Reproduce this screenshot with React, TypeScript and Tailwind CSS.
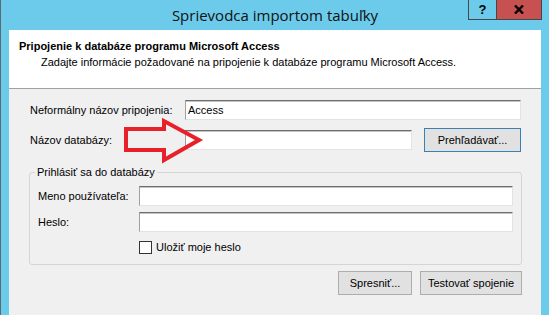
const font = { fontFamily: '"Liberation Sans", Arial, sans-serif' };

const TextBox = ({ value = '', width }: { value?: string; width: string }) => (
  <div
    className={`${width} h-[20px] bg-white border border-t-[#6e6e6e] border-l-[#a0a0a0] border-r-[#e3e3e3] border-b-[#e3e3e3] shadow-[inset_0_1px_0_#c4c4c4] flex items-center pl-[2px] text-[11px] text-black`}
  >
    {value}
  </div>
);

const WinButton = ({ label, width, primary = false }: { label: string; width: string; primary?: boolean }) => (
  <button
    className={`${width} h-[24px] bg-[#e1e1e1] border ${primary ? 'border-[#3c7fb1]' : 'border-[#adadad]'} text-[11px] text-black flex items-center justify-center`}
  >
    {label}
  </button>
);

const App = () => {
  return (
    <div className="w-[549px] h-[315px] bg-[#6ccbea] flex flex-col overflow-hidden border-l border-[#5a6a72]" style={font}>
      {/* Title bar */}
      <div className="h-[30px] grid grid-cols-[1fr_auto_1fr] items-start shrink-0">
        <div />
        <div className="pt-[5px] text-[15px] leading-[20px] text-[#111]" style={{ fontFamily: '"Open Sans", "Noto Sans", sans-serif' }}>
          Sprievodca importom tabuľky
        </div>
        <div className="flex justify-end pr-[7px]">
          <div className="flex h-[20px] border border-t-0 border-[#474747]">
            <div className="w-[28px] flex items-center justify-center text-[13px] font-bold text-black border-r border-[#474747]">
              ?
            </div>
            <div className="w-[44px] bg-[#c75050] flex items-center justify-center">
              <svg width="10" height="9" viewBox="0 0 10 9">
                <path d="M1 0.5 L9 8.5 M9 0.5 L1 8.5" stroke="#000" strokeWidth="2.4" />
              </svg>
            </div>
          </div>
        </div>
      </div>

      {/* Client area */}
      <div className="flex-1 ml-[8px] mr-[8px] flex flex-col">
        <div className="h-[59px] bg-white border-b border-[#a0a0a0] pl-[10px] pt-[10px] shrink-0">
          <div className="text-[11px] font-bold leading-[13px] text-black">
            Pripojenie k databáze programu Microsoft Access
          </div>
          <div className="text-[11px] leading-[13px] text-black pl-[22px] mt-[3px]">
            Zadajte informácie požadované na pripojenie k databáze programu Microsoft Access.
          </div>
        </div>

        <div className="flex-1 bg-[#f0f0f0] pl-[21px] pr-[19px] pt-[11px] text-[11px] text-black relative">
          <div className="flex items-center h-[20px]">
            <div className="w-[155px]">Neformálny názov pripojenia:</div>
            <TextBox value="Access" width="w-[336px]" />
          </div>

          <div className="flex items-center h-[24px] mt-[8px]">
            <div className="w-[155px]">Názov databázy:</div>
            <TextBox width="w-[227px]" />
            <div className="ml-[12px]">
              <WinButton label="Prehľadávať..." width="w-[97px]" primary />
            </div>
          </div>

          <fieldset className="-ml-[1px] mt-[14px] w-[493px] border border-[#d5d5d5] rounded-[3px] pl-[5px] pb-[10px]">
            <legend className="px-[2px] leading-[13px]">Prihlásiť sa do databázy</legend>
            <div className="flex items-center h-[20px] mt-[7px] pl-[3px]">
              <div className="w-[101px]">Meno používateľa:</div>
              <TextBox width="w-[374px]" />
            </div>
            <div className="flex items-center h-[20px] mt-[6px] pl-[3px]">
              <div className="w-[101px]">Heslo:</div>
              <TextBox width="w-[374px]" />
            </div>
            <div className="flex items-center h-[13px] mt-[9px] pl-[104px] gap-[4px]">
              <div className="w-[13px] h-[13px] bg-white border border-[#333333]" />
              <span>Uložiť moje heslo</span>
            </div>
          </fieldset>

          {/* red arrow annotation over the form */}
          <svg className="absolute left-[106px] top-[21px]" width="90" height="60" viewBox="0 0 90 60">
            <polygon points="11,19 49,19 49,11 84,30 49,50 49,40 11,40" fill="none" stroke="#e8202a" strokeWidth="4" strokeLinejoin="miter" />
          </svg>

          <div className="flex justify-end gap-[8px] mt-[6px]">
            <WinButton label="Spresniť..." width="w-[74px]" />
            <WinButton label="Testovať spojenie" width="w-[102px]" />
          </div>
        </div>
      </div>
    </div>
  );
};

export default App;
